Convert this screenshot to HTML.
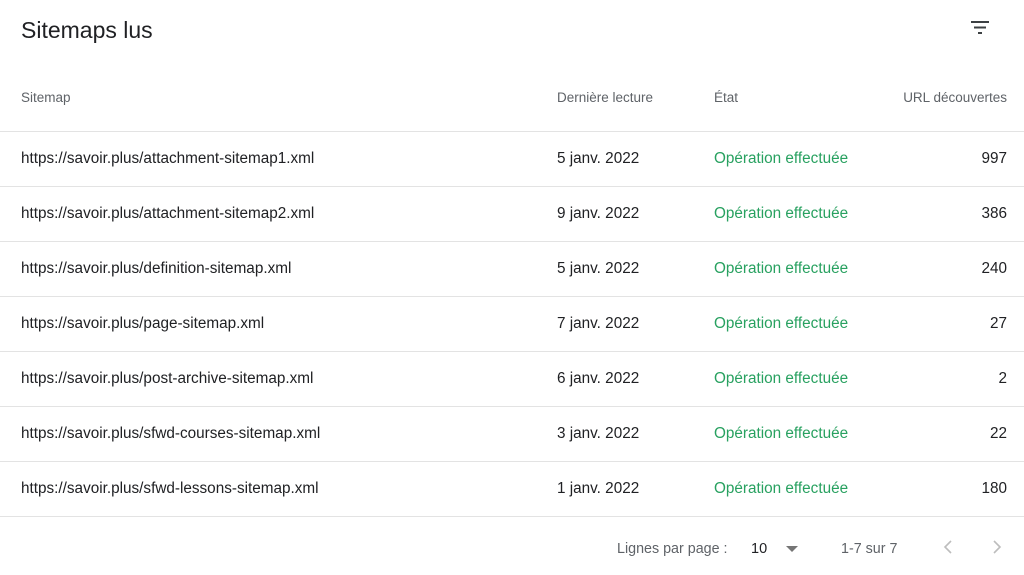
<!DOCTYPE html>
<html><head><meta charset="utf-8"><style>
body{margin:0;width:1024px;height:575px;background:#fff;font-family:"Liberation Sans",Arial,sans-serif;position:relative;overflow:hidden;color:#202124}
.t{position:absolute;white-space:nowrap}
.h{font-size:13.5px;color:#5f6368;top:90px}
.row{position:absolute;left:0;width:1024px;height:55px;border-top:1px solid #e3e3e3;font-size:15.3px}
.row span{position:absolute;top:18px;white-space:nowrap}
.g{color:#28a160}
</style></head><body>
<div class="t" style="left:21px;top:17px;font-size:23px;color:#202124">Sitemaps lus</div>
<svg style="position:absolute;left:968px;top:16px" width="24" height="24" viewBox="0 0 24 24"><path d="M3 6h18M6 11.5h12M10 17h4" stroke="#3c4043" stroke-width="2"/></svg>
<div class="t h" style="left:21px">Sitemap</div>
<div class="t h" style="left:557px">Dernière lecture</div>
<div class="t h" style="left:714px">État</div>
<div class="t h" style="right:17px">URL découvertes</div>
<div class="row" style="top:131px"><span style="left:21px">https://savoir.plus/attachment-sitemap1.xml</span><span style="left:557px">5 janv. 2022</span><span class="g" style="left:714px">Opération effectuée</span><span style="right:17px">997</span></div>
<div class="row" style="top:186px"><span style="left:21px">https://savoir.plus/attachment-sitemap2.xml</span><span style="left:557px">9 janv. 2022</span><span class="g" style="left:714px">Opération effectuée</span><span style="right:17px">386</span></div>
<div class="row" style="top:241px"><span style="left:21px">https://savoir.plus/definition-sitemap.xml</span><span style="left:557px">5 janv. 2022</span><span class="g" style="left:714px">Opération effectuée</span><span style="right:17px">240</span></div>
<div class="row" style="top:296px"><span style="left:21px">https://savoir.plus/page-sitemap.xml</span><span style="left:557px">7 janv. 2022</span><span class="g" style="left:714px">Opération effectuée</span><span style="right:17px">27</span></div>
<div class="row" style="top:351px"><span style="left:21px">https://savoir.plus/post-archive-sitemap.xml</span><span style="left:557px">6 janv. 2022</span><span class="g" style="left:714px">Opération effectuée</span><span style="right:17px">2</span></div>
<div class="row" style="top:406px"><span style="left:21px">https://savoir.plus/sfwd-courses-sitemap.xml</span><span style="left:557px">3 janv. 2022</span><span class="g" style="left:714px">Opération effectuée</span><span style="right:17px">22</span></div>
<div class="row" style="top:461px"><span style="left:21px">https://savoir.plus/sfwd-lessons-sitemap.xml</span><span style="left:557px">1 janv. 2022</span><span class="g" style="left:714px">Opération effectuée</span><span style="right:17px">180</span></div>
<div class="row" style="top:516px;height:0"></div>
<div class="t" style="left:617px;top:541px;font-size:14.3px;color:#5f6368">Lignes par page :</div>
<div class="t" style="left:751px;top:541px;font-size:14.5px;color:#202124">10</div>
<svg style="position:absolute;left:785px;top:545px" width="14" height="8"><path d="M1 1h12L7 7z" fill="#757575"/></svg>
<div class="t" style="left:841px;top:541px;font-size:14.3px;color:#5f6368">1-7 sur 7</div>
<svg style="position:absolute;left:940px;top:539px" width="16" height="16"><path d="M11 2L5 8l6 6" stroke="#bdbdbd" stroke-width="1.6" fill="none"/></svg>
<svg style="position:absolute;left:989px;top:539px" width="16" height="16"><path d="M5 2l6 6-6 6" stroke="#bdbdbd" stroke-width="1.6" fill="none"/></svg>
</body></html>
